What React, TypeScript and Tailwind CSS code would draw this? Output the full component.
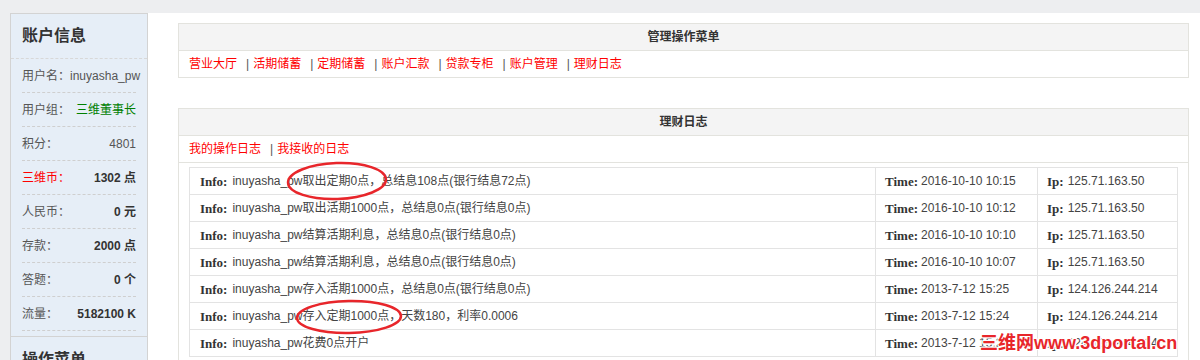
import React from "react";

const rows = [
  { label: "用户名：", value: "inuyasha_pw", cls: "text-[#555]", lcls: "text-[#555]" },
  { label: "用户组：", value: "三维董事长", cls: "text-[#008000]", lcls: "text-[#555]" },
  { label: "积分：", value: "4801", cls: "text-[#555]", lcls: "text-[#555]" },
  { label: "三维币：", value: "1302 点", cls: "text-[#333] font-bold", lcls: "text-[#ff0000]" },
  { label: "人民币：", value: "0 元", cls: "text-[#333] font-bold", lcls: "text-[#555]" },
  { label: "存款：", value: "2000 点", cls: "text-[#333] font-bold", lcls: "text-[#555]" },
  { label: "答题：", value: "0 个", cls: "text-[#333] font-bold", lcls: "text-[#555]" },
  { label: "流量：", value: "5182100 K", cls: "text-[#333] font-bold", lcls: "text-[#555]" },
];

const menu = ["营业大厅", "活期储蓄", "定期储蓄", "账户汇款", "贷款专柜", "账户管理", "理财日志"];

const logs = [
  { info: "inuyasha_pw取出定期0点，总结息108点(银行结息72点)", time: "2016-10-10 10:15", ip: "125.71.163.50" },
  { info: "inuyasha_pw取出活期1000点，总结息0点(银行结息0点)", time: "2016-10-10 10:12", ip: "125.71.163.50" },
  { info: "inuyasha_pw结算活期利息，总结息0点(银行结息0点)", time: "2016-10-10 10:10", ip: "125.71.163.50" },
  { info: "inuyasha_pw结算活期利息，总结息0点(银行结息0点)", time: "2016-10-10 10:07", ip: "125.71.163.50" },
  { info: "inuyasha_pw存入活期1000点，总结息0点(银行结息0点)", time: "2013-7-12 15:25", ip: "124.126.244.214" },
  { info: "inuyasha_pw存入定期1000点，天数180，利率0.0006", time: "2013-7-12 15:24", ip: "124.126.244.214" },
  { info: "inuyasha_pw花费0点开户", time: "2013-7-12 15:24", ip: "124.126.244.214" },
];

function Sep() {
  return <span className="ml-[9px] mr-[4px] text-[#555]">|</span>;
}

export default function App() {
  return (
    <div className="relative w-[1200px] h-[360px] overflow-hidden bg-[#edeef0] pt-[13px] pl-[10px] flex font-['Liberation_Sans','Noto_Sans_CJK_SC',sans-serif]">
      {/* Sidebar */}
      <div className="w-[138px] shrink-0 h-[400px] bg-[#e6eef7] border-t border-l border-r border-[#d3d3d3]">
        <div className="h-[45px] border-b border-dashed border-[#d8d8d8] px-[11px] flex items-center text-[16px] font-bold text-[#333] leading-none">
          账户信息
        </div>
        <div className="px-[11px]">
          {rows.map((r) => (
            <div
              key={r.label}
              className="h-[34px] border-b border-dashed border-[#cfcfcf] flex items-center justify-between text-[12px] leading-none whitespace-nowrap"
            >
              <span className={"shrink-0 " + r.lcls}>{r.label}</span>
              <span className={r.cls}>{r.value}</span>
            </div>
          ))}
        </div>
        <div className="h-[6px] border-b border-[#d3d3d3]" />
        <div className="h-[45px] px-[11px] flex items-center text-[16px] font-bold text-[#333] leading-none">
          操作菜单
        </div>
      </div>

      {/* Main */}
      <div className="flex-1 bg-white pl-[30px] pr-[11px] pt-[10px]">
        <div className="border border-[#e3e3de]">
          <div className="h-[27px] bg-[#f4f4f4] border-b border-[#e3e3de] flex items-center justify-center text-[12px] font-bold text-[#333] leading-none">
            管理操作菜单
          </div>
          <div className="h-[26px] flex items-center pl-[10px] text-[12px] leading-none">
            {menu.map((m, i) => (
              <React.Fragment key={m}>
                {i > 0 && <Sep />}
                <span className="text-[#ff0000]">{m}</span>
              </React.Fragment>
            ))}
          </div>
        </div>

        <div className="mt-[30px] border border-[#e3e3de] h-[300px]">
          <div className="h-[27px] bg-[#f4f4f4] border-b border-[#e3e3de] flex items-center justify-center text-[12px] font-bold text-[#333] leading-none">
            理财日志
          </div>
          <div className="h-[27px] border-b border-[#e3e3de] flex items-center pl-[10px] text-[12px] leading-none">
            <span className="text-[#ff0000]">我的操作日志</span>
            <Sep />
            <span className="text-[#ff0000]">我接收的日志</span>
          </div>
          <div className="px-[10px] pt-[4px]">
            <div className="border-t border-l border-r border-[#e3e3e3] text-[12px] leading-none">
              {logs.map((l, i) => (
                <div key={i} className="h-[27px] border-b border-[#e3e3e3] flex">
                  <div className="flex-1 flex items-center pl-[10px] text-[#444] whitespace-nowrap">
                    <span className="font-['Liberation_Serif',serif] text-[13px] font-bold text-[#333] mr-[5px]">Info:</span>
                    {l.info}
                  </div>
                  <div className="w-[162px] border-l border-[#e3e3e3] flex items-center pl-[9px] text-[#444] whitespace-nowrap">
                    <span className="font-['Liberation_Serif',serif] text-[13px] font-bold text-[#333] mr-[3px]">Time:</span>
                    {l.time}
                  </div>
                  <div className="w-[140px] border-l border-[#e3e3e3] flex items-center pl-[9px] text-[#444] whitespace-nowrap">
                    <span className="font-['Liberation_Serif',serif] text-[13px] font-bold text-[#333] mr-[4px]">Ip:</span>
                    {l.ip}
                  </div>
                </div>
              ))}
            </div>
          </div>
        </div>
      </div>

      {/* Annotation ellipses */}
      <svg className="absolute left-0 top-0 pointer-events-none" width="1200" height="360" viewBox="0 0 1200 360">
        <ellipse cx="337" cy="181" rx="49" ry="18" fill="none" stroke="#e8262b" strokeWidth="2.5" transform="rotate(-2 337 181)" />
        <ellipse cx="349" cy="317" rx="52" ry="16" fill="none" stroke="#e8262b" strokeWidth="2.5" transform="rotate(-1 349 317)" />
      </svg>

      {/* Watermark */}
      <div className="absolute left-[980px] top-[334px] text-[18px] font-bold leading-none text-[#e8262b] font-['Liberation_Sans','Noto_Sans_CJK_SC',sans-serif] whitespace-nowrap [text-shadow:1px_0_0_#fff,-1px_0_0_#fff,0_1px_0_#fff,0_-1px_0_#fff,1px_1px_0_#fff,-1px_-1px_0_#fff,1px_-1px_0_#fff,-1px_1px_0_#fff]">
        三维网www.3dportal.cn
      </div>
    </div>
  );
}
